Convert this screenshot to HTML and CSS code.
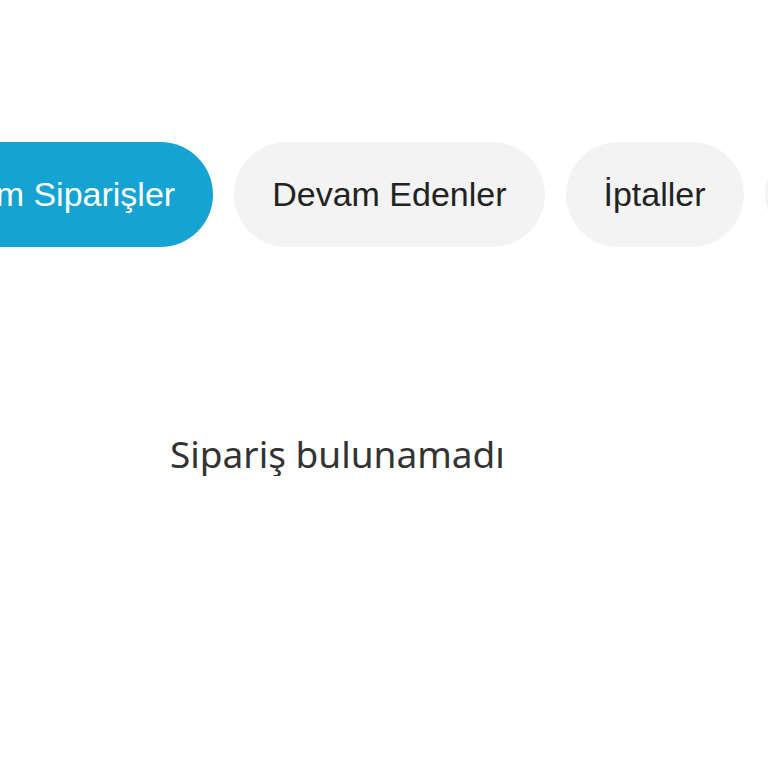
FILE: index.html
```html
<!DOCTYPE html>
<html>
<head>
  <title>Siparişlerim</title>
  <meta charset="utf-8">
  <link rel="stylesheet" href="styles.css">
</head>
<body>
  <div class="orders">
    <div class="tabs">
      <button class="tab-btn active">Tüm Siparişler</button>
      <button class="tab-btn">Devam Edenler</button>
      <button class="tab-btn">İptaller</button>
      <button class="tab-btn">Tamamlananlar</button>
    </div>

    <div class="empty-state">Sipariş bulunamadı</div>
  </div>
</body>
</html>
```

FILE: styles.css
```css
:root {
  --bg-color: #ffffff;
  --text-color: #222222;
  --muted-text: #333333;
  --primary: #14a3d2;
  --pill-bg: #f3f3f3;
}

body {
  margin: 0;
  background-color: var(--bg-color);
  color: var(--text-color);
  overflow: hidden;
}

.orders {
  display: flex;
  flex-direction: column;
}

/* Tab pills, strip is scrolled a bit to the right */
.tabs {
  display: flex;
  flex-wrap: nowrap;
  gap: 21px;
  margin-top: 142px;
  margin-left: -82px;
}

.tab-btn {
  flex: none;
  height: 105px;
  padding: 0 38px;
  border: none;
  border-radius: 53px;
  background: var(--pill-bg);
  color: var(--text-color);
  font-family: "Liberation Sans", Arial, sans-serif;
  font-size: 34px;
  white-space: nowrap;
  cursor: pointer;
}

.tab-btn.active {
  background: var(--primary);
  color: #ffffff;
}

/* Empty list */
.empty-state {
  margin-top: 185px;
  padding-left: 170px;
  font-family: "Noto Sans", sans-serif;
  font-size: 37px;
  line-height: 1.2;
  color: var(--muted-text);
}
```
